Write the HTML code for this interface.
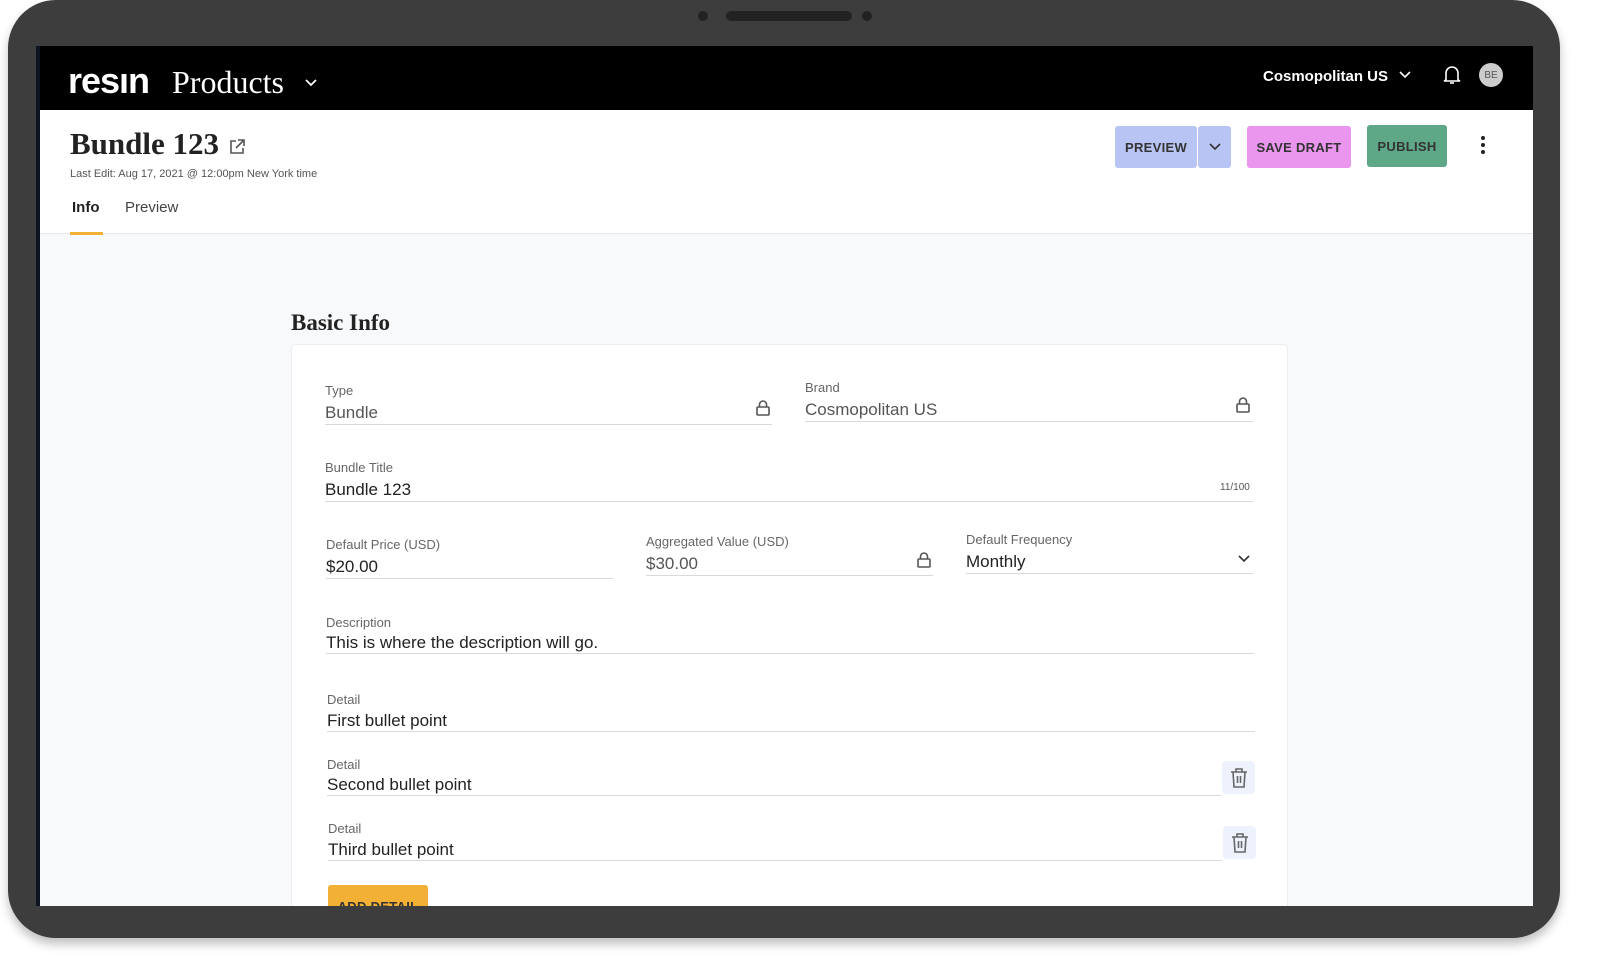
<!DOCTYPE html>
<html><head><meta charset="utf-8"><style>
*{box-sizing:border-box;margin:0;padding:0}
body{width:1600px;height:972px;background:#fff;position:relative;overflow:hidden;font-family:"Liberation Sans",sans-serif}
.frame{position:absolute;left:8px;top:0;width:1552px;height:938px;background:#3d3d3d;border-radius:48px;box-shadow:0 6px 10px rgba(0,0,0,.25)}
.screen{position:absolute;left:36px;top:46px;width:1497px;height:860px;background:#f8f9fb;overflow:hidden}
.hdr{position:absolute;left:0;top:0;width:100%;height:64px;background:#000;color:#fff}
.a{position:absolute}
.serif{font-family:"Liberation Serif",serif}
.top{position:absolute;left:0;top:64px;width:100%;height:124px;background:#fff;border-bottom:1px solid #e6e7ea}
.lbl{position:absolute;font-size:13px;color:#666}
.val{position:absolute;font-size:17px;color:#222}
.line{position:absolute;height:1px;background:#d8d9dc}
.btn{position:absolute;height:42px;border-radius:3px;font-size:13px;font-weight:bold;color:#333;display:flex;align-items:center;justify-content:center;letter-spacing:.3px}
.trash{position:absolute;width:33px;height:33px;background:#eef2fd;border-radius:4px;display:flex;align-items:center;justify-content:center}
</style></head><body>
<div class="frame">
 <div class="a" style="left:690px;top:11px;width:10px;height:10px;border-radius:50%;background:#222"></div>
 <div class="a" style="left:718px;top:11px;width:126px;height:10px;border-radius:5px;background:#222"></div>
 <div class="a" style="left:854px;top:11px;width:10px;height:10px;border-radius:50%;background:#222"></div>
</div>
<div class="screen">
 <div class="hdr">
  <div class="a" style="left:32px;top:14px;font-size:36px;font-weight:bold;letter-spacing:-1px">resın</div>
  <div class="a serif" style="left:136px;top:18px;font-size:32px">Products</div>
  <svg class="a" style="left:268px;top:32px" width="14" height="10" viewBox="0 0 14 10"><path d="M2 2l5 5 5-5" stroke="#fff" stroke-width="1.8" fill="none"/></svg>
  <div class="a" style="left:1227px;top:22px;font-size:15px;font-weight:bold">Cosmopolitan US</div>
  <svg class="a" style="left:1362px;top:24px" width="14" height="10" viewBox="0 0 14 10"><path d="M2 2l5 5 5-5" stroke="#fff" stroke-width="1.6" fill="none"/></svg>
  <svg class="a" style="left:1406px;top:18px" width="20" height="22" viewBox="0 0 20 22"><path d="M4 16V9a6 6 0 0112 0v7l2 1H2z" stroke="#fff" stroke-width="1.6" fill="none"/><path d="M8 19h4" stroke="#fff" stroke-width="1.6"/></svg>
  <div class="a" style="left:1443px;top:17px;width:24px;height:24px;border-radius:50%;background:#ccc;color:#555;font-size:10px;display:flex;align-items:center;justify-content:center">BE</div>
 </div>
 <div class="top">
  <div class="a serif" style="left:34px;top:16px;font-size:31px;font-weight:bold;color:#222">Bundle 123</div>
  <svg class="a" style="left:192px;top:28px" width="18" height="18" viewBox="0 0 18 18"><path d="M8 3H3v12h12v-5M10 2h6v6M16 2L8 10" stroke="#555" stroke-width="1.6" fill="none"/></svg>
  <div class="a" style="left:34px;top:58px;font-size:11px;color:#555">Last Edit: Aug 17, 2021 @ 12:00pm New York time</div>
  <div class="a" style="left:36px;top:89px;font-size:15px;font-weight:bold;color:#222">Info</div>
  <div class="a" style="left:89px;top:89px;font-size:15px;color:#444">Preview</div>
  <div class="a" style="left:34px;top:122px;width:33px;height:3px;background:#f2b035"></div>
  <div class="btn" style="left:1079px;top:16px;width:82px;background:#b8c4f4">PREVIEW</div>
  <div class="btn" style="left:1162px;top:16px;width:33px;background:#b8c4f4"><svg width="12" height="8" viewBox="0 0 12 8"><path d="M1 1l5 5 5-5" stroke="#333" stroke-width="1.6" fill="none"/></svg></div>
  <div class="btn" style="left:1211px;top:16px;width:104px;background:#ea96ee">SAVE DRAFT</div>
  <div class="btn" style="left:1331px;top:15px;width:80px;background:#5ea888">PUBLISH</div>
  <div class="a" style="left:1445px;top:26px;width:4px;height:4px;border-radius:50%;background:#222;box-shadow:0 7px 0 #222,0 14px 0 #222"></div>
 </div>
 <div class="a serif" style="left:255px;top:264px;font-size:23px;font-weight:bold;color:#222">Basic Info</div>
 <div class="a" style="left:255px;top:298px;width:997px;height:600px;background:#fff;border:1px solid #eceef1;border-radius:4px">
  <div class="lbl" style="left:33px;top:38px">Type</div>
  <div class="val" style="left:33px;top:58px;color:#555">Bundle</div>
  <svg class="a" style="left:463px;top:54px" width="16" height="18" viewBox="0 0 16 18"><rect x="2" y="8" width="12" height="8" rx="1" stroke="#555" stroke-width="1.6" fill="none"/><path d="M4.5 8V5.5a3.5 3.5 0 017 0V8" stroke="#555" stroke-width="1.6" fill="none"/></svg>
  <div class="line" style="left:33px;top:79px;width:447px"></div>
  <div class="lbl" style="left:513px;top:35px">Brand</div>
  <div class="val" style="left:513px;top:55px;color:#555">Cosmopolitan US</div>
  <svg class="a" style="left:943px;top:51px" width="16" height="18" viewBox="0 0 16 18"><rect x="2" y="8" width="12" height="8" rx="1" stroke="#555" stroke-width="1.6" fill="none"/><path d="M4.5 8V5.5a3.5 3.5 0 017 0V8" stroke="#555" stroke-width="1.6" fill="none"/></svg>
  <div class="line" style="left:513px;top:76px;width:448px"></div>
  <div class="lbl" style="left:33px;top:115px">Bundle Title</div>
  <div class="val" style="left:33px;top:135px">Bundle 123</div>
  <div class="a" style="left:928px;top:137px;font-size:10px;color:#555">11/100</div>
  <div class="line" style="left:33px;top:156px;width:928px"></div>
  <div class="lbl" style="left:34px;top:192px">Default Price (USD)</div>
  <div class="val" style="left:34px;top:212px">$20.00</div>
  <div class="line" style="left:34px;top:233px;width:287px"></div>
  <div class="lbl" style="left:354px;top:189px">Aggregated Value (USD)</div>
  <div class="val" style="left:354px;top:209px;color:#555">$30.00</div>
  <svg class="a" style="left:624px;top:206px" width="16" height="18" viewBox="0 0 16 18"><rect x="2" y="8" width="12" height="8" rx="1" stroke="#555" stroke-width="1.6" fill="none"/><path d="M4.5 8V5.5a3.5 3.5 0 017 0V8" stroke="#555" stroke-width="1.6" fill="none"/></svg>
  <div class="line" style="left:354px;top:230px;width:287px"></div>
  <div class="lbl" style="left:674px;top:187px">Default Frequency</div>
  <div class="val" style="left:674px;top:207px">Monthly</div>
  <svg class="a" style="left:946px;top:210px" width="12" height="8" viewBox="0 0 12 8"><path d="M1 1l5 5 5-5" stroke="#333" stroke-width="1.6" fill="none"/></svg>
  <div class="line" style="left:674px;top:228px;width:287px"></div>
  <div class="lbl" style="left:34px;top:270px">Description</div>
  <div class="val" style="left:34px;top:288px">This is where the description will go.</div>
  <div class="line" style="left:34px;top:308px;width:928px"></div>
  <div class="lbl" style="left:35px;top:347px">Detail</div>
  <div class="val" style="left:35px;top:366px">First bullet point</div>
  <div class="line" style="left:35px;top:386px;width:928px"></div>
  <div class="lbl" style="left:35px;top:412px">Detail</div>
  <div class="val" style="left:35px;top:430px">Second bullet point</div>
  <div class="line" style="left:35px;top:450px;width:894px"></div>
  <div class="trash" style="left:930px;top:416px"><svg width="20" height="22" viewBox="0 0 20 22"><path d="M2 5h16M7 5V2h6v3M4 5l1 15h10l1-15M8.5 9v7M11.5 9v7" stroke="#666" stroke-width="1.6" fill="none"/></svg></div>
  <div class="lbl" style="left:36px;top:476px">Detail</div>
  <div class="val" style="left:36px;top:495px">Third bullet point</div>
  <div class="line" style="left:36px;top:515px;width:894px"></div>
  <div class="trash" style="left:931px;top:481px"><svg width="20" height="22" viewBox="0 0 20 22"><path d="M2 5h16M7 5V2h6v3M4 5l1 15h10l1-15M8.5 9v7M11.5 9v7" stroke="#666" stroke-width="1.6" fill="none"/></svg></div>
  <div class="btn" style="left:36px;top:540px;width:100px;height:40px;background:#f2b035;align-items:flex-start;padding-top:14px">ADD DETAIL</div>
 </div>
 <div class="a" style="left:0;top:0;width:4px;height:860px;background:#0d1520"></div>
</div>
</body></html>
